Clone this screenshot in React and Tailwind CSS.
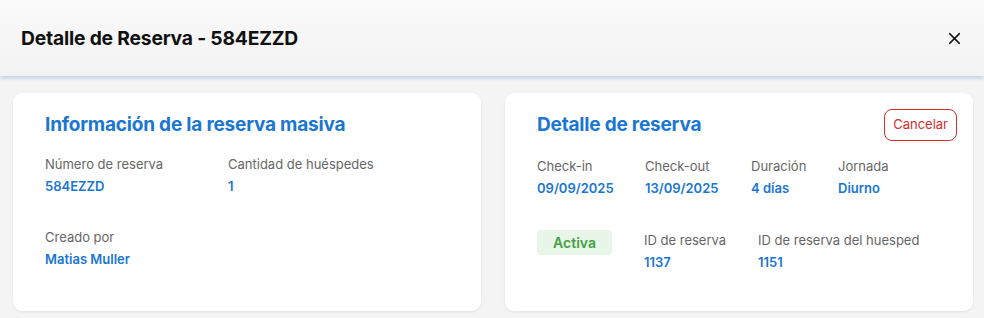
import { X } from "lucide-react";

function Field({ label, value, className = "" }) {
  return (
    <div className={`flex flex-col gap-[5px] ${className}`}>
      <span className="text-[13px] leading-[17px] text-[#666]">{label}</span>
      <span className="text-[13px] leading-[17px] font-semibold text-[#1976d2]">{value}</span>
    </div>
  );
}

export default function App() {
  return (
    <div className="w-[984px] h-[318px] bg-[#f4f4f4] font-['Inter',sans-serif] overflow-hidden">
      {/* Header */}
      <div className="h-[76px] flex items-center justify-between pl-[21px] pr-[20px] bg-gradient-to-b from-[#fafafa] to-[#f3f3f3] shadow-[0_2px_4px_rgba(120,160,210,0.45)]">
        <h1 className="text-[19.3px] font-bold text-[#111] tracking-[-0.2px]">Detalle de Reserva - 584EZZD</h1>
        <X className="w-[19px] h-[19px] text-[#111]" strokeWidth={2.2} />
      </div>

      {/* Cards */}
      <div className="grid grid-cols-2 gap-[24px] pl-[13px] pr-[11px] pt-[17px] pb-[8px]">
        <div className="bg-white rounded-[9px] shadow-[0_1px_3px_rgba(0,0,0,0.08)] h-[218px] pl-[32px] pr-[20px] pt-[19px]">
          <h2 className="text-[19px] font-bold text-[#1976d2] leading-[26px] tracking-[-0.2px]">Información de la reserva masiva</h2>
          <div className="grid grid-cols-[183px_1fr] mt-[18px] gap-y-[34px]">
            <Field label="Número de reserva" value="584EZZD" />
            <Field label="Cantidad de huéspedes" value="1" />
            <Field label="Creado por" value="Matias Muller" />
          </div>
        </div>

        <div className="bg-white rounded-[9px] shadow-[0_1px_3px_rgba(0,0,0,0.08)] h-[218px] pl-[32px] pr-[16px] pt-[16px]">
          <div className="flex items-center justify-between">
            <h2 className="text-[19px] font-bold text-[#1976d2] leading-[26px] tracking-[-0.2px]">Detalle de reserva</h2>
            <button className="h-[32px] px-[8px] rounded-[8px] border border-[#d32f2f] text-[#d32f2f] text-[13px]">Cancelar</button>
          </div>
          <div className="flex mt-[17px]">
            <Field label="Check-in" value="09/09/2025" className="w-[108px]" />
            <Field label="Check-out" value="13/09/2025" className="w-[106px]" />
            <Field label="Duración" value="4 días" className="w-[87px]" />
            <Field label="Jornada" value="Diurno" />
          </div>
          <div className="flex mt-[35px]">
            <div className="w-[107px] -mt-[2px]">
              <span className="inline-flex items-center justify-center w-[75px] h-[25px] rounded-[4px] bg-[#e8f5e9] text-[#43a047] text-[14px] font-semibold">Activa</span>
            </div>
            <Field label="ID de reserva" value="1137" className="w-[114px]" />
            <Field label="ID de reserva del huesped" value="1151" />
          </div>
        </div>
      </div>
    </div>
  );
}
